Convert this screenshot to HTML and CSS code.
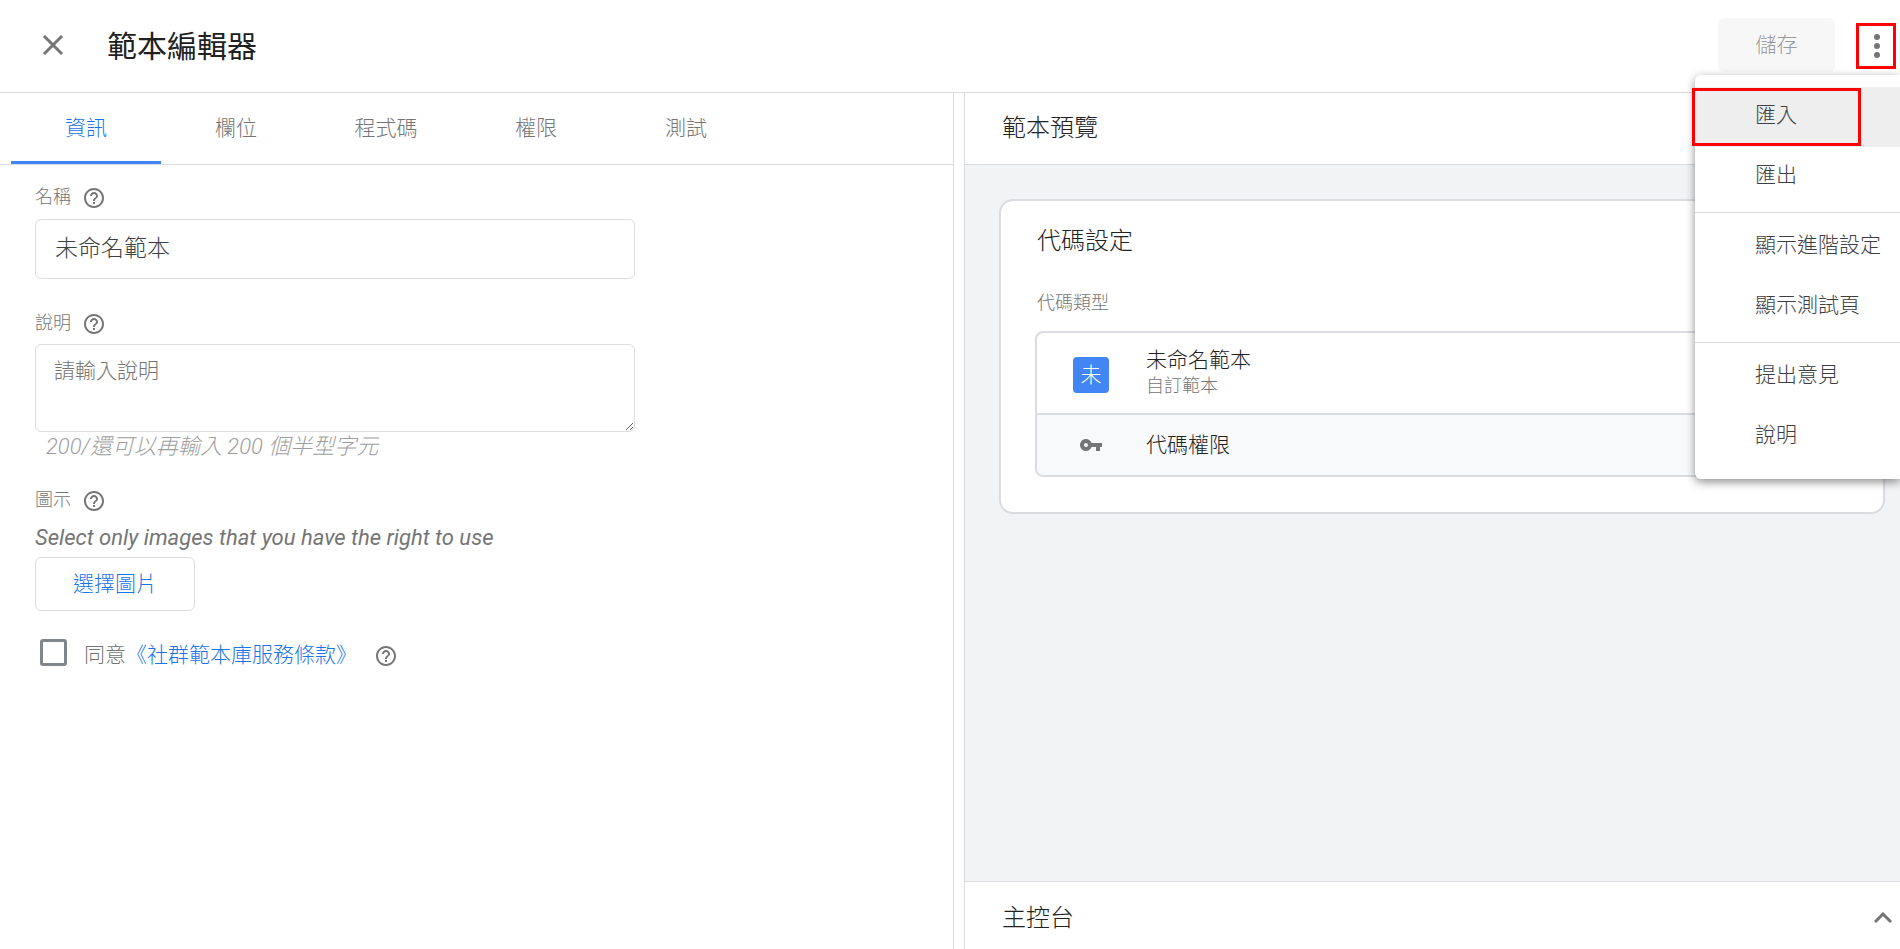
FILE: index.html
```html
<!DOCTYPE html>
<html lang="zh-Hant">
<head>
<meta charset="utf-8">
<title>範本編輯器</title>
<link rel="stylesheet" href="styles.css">
</head>
<body>
<svg class="symbols" aria-hidden="true">
  <symbol id="help" viewBox="0 0 24 24"><path d="M11 18h2v-2h-2v2zm1-16C6.48 2 2 6.48 2 12s4.480 10 10 10 10-4.480 10-10S17.520 2 12 2zm0 18c-4.410 0-8-3.590-8-8s3.590-8 8-8 8 3.590 8 8-3.590 8-8 8zm0-14c-2.210 0-4 1.790-4 4h2c0-1.100.9-2 2-2s2 .9 2 2c0 2-3 1.750-3 5h2c0-2.250 3-2.500 3-5 0-2.210-1.790-4-4-4z"/></symbol>
</svg>
<header class="topbar">
  <button class="icon-button" type="button" aria-label="關閉">
    <svg class="close-icon" viewBox="0 0 22 22"><path d="M2 2l18 18M20 2L2 20"/></svg>
  </button>
  <h1 class="title">範本編輯器</h1>
  <button class="save" type="button" disabled>儲存</button>
  <div class="overflow">
    <button class="kebab" type="button" aria-label="更多動作">
      <svg class="kebab-icon" viewBox="0 0 8 26"><circle cx="5" cy="4" r="3"/><circle cx="5" cy="13" r="3"/><circle cx="5" cy="22" r="3"/></svg>
    </button>
    <div class="menu" role="menu">
      <button class="menu-item active" type="button" role="menuitem">匯入</button>
      <button class="menu-item" type="button" role="menuitem">匯出</button>
      <hr class="menu-divider">
      <button class="menu-item" type="button" role="menuitem">顯示進階設定</button>
      <button class="menu-item" type="button" role="menuitem">顯示測試頁</button>
      <hr class="menu-divider">
      <button class="menu-item" type="button" role="menuitem">提出意見</button>
      <button class="menu-item" type="button" role="menuitem">說明</button>
    </div>
  </div>
</header>
<main class="workspace">
  <section class="editor">
    <nav class="tabs" role="tablist">
      <button class="tab selected" type="button" role="tab" aria-selected="true">資訊</button>
      <button class="tab" type="button" role="tab">欄位</button>
      <button class="tab" type="button" role="tab">程式碼</button>
      <button class="tab" type="button" role="tab">權限</button>
      <button class="tab" type="button" role="tab">測試</button>
    </nav>
    <form class="form">
      <div class="label-row"><label for="name">名稱</label><svg class="help"><use href="#help"/></svg></div>
      <input class="text-input" id="name" type="text" value="未命名範本">
      <div class="label-row spaced"><label for="desc">說明</label><svg class="help"><use href="#help"/></svg></div>
      <textarea class="text-area" id="desc" placeholder="請輸入說明"></textarea>
      <p class="counter">200/還可以再輸入 200 個半型字元</p>
      <div class="label-row icon-label"><span>圖示</span><svg class="help"><use href="#help"/></svg></div>
      <p class="note">Select only images that you have the right to use</p>
      <button class="choose" type="button">選擇圖片</button>
      <div class="agree">
        <input class="checkbox" id="agree" type="checkbox">
        <span class="agree-text"><label for="agree">同意</label><a class="link" href="#">《社群範本庫服務條款》</a></span>
        <svg class="help"><use href="#help"/></svg>
      </div>
    </form>
  </section>
  <div class="gutter"></div>
  <section class="preview">
    <h2 class="panel-title">範本預覽</h2>
    <div class="canvas">
      <article class="card">
        <h3 class="card-title">代碼設定</h3>
        <p class="card-label">代碼類型</p>
        <div class="tag-box">
          <div class="tag-row">
            <span class="tile">未</span>
            <div class="tag-text"><span class="tag-name">未命名範本</span><span class="tag-kind">自訂範本</span></div>
          </div>
          <div class="permission-row">
            <svg class="key" viewBox="1 6 22 12"><path d="M12.650 10C11.830 7.670 9.610 6 7 6c-3.310 0-6 2.690-6 6s2.690 6 6 6c2.610 0 4.830-1.670 5.650-4H17v4h4v-4h2v-4H12.650zM7 14c-1.100 0-2-.9-2-2s.9-2 2-2 2 .9 2 2-.9 2-2 2z"/></svg>
            <span class="permission-name">代碼權限</span>
            <svg class="chevron" viewBox="0 0 18 11"><path d="M1 1l8 8 8-8"/></svg>
          </div>
        </div>
      </article>
    </div>
    <button class="console" type="button">
      <span>主控台</span>
      <svg class="chevron" viewBox="0 0 18 11"><path d="M1 10l8-8 8 8"/></svg>
    </button>
  </section>
</main>
</body>
</html>
```
FILE: styles.css
```css
*, *::before, *::after { box-sizing: border-box; }

body {
  margin: 0;
  min-height: 100vh;
  display: flex;
  flex-direction: column;
  overflow-x: hidden;
  background: #fff;
  color: #212121;
  font: 300 21px/30px Roboto, "Noto Sans CJK TC", sans-serif;
}

button, input, textarea { font: inherit; color: inherit; }
button { background: none; border: 0; padding: 0; cursor: pointer; }
h1, h2, h3, p { margin: 0; font-weight: 300; }
.symbols { position: absolute; width: 0; height: 0; }

.topbar {
  display: flex;
  align-items: center;
  height: 93px;
  padding: 0 4px 2px 38px;
  border-bottom: 1px solid #dadce0;
}
.icon-button { width: 30px; height: 30px; display: grid; place-items: center; }
.close-icon { width: 22px; height: 22px; fill: none; stroke: #757575; stroke-width: 3; }
.title { margin-left: 39px; padding-top: 4px; font-size: 30px; line-height: 40px; font-weight: 400; }
.save {
  margin-left: auto;
  width: 117px;
  height: 54px;
  border-radius: 6px;
  background: #f7f7f7;
  color: #9a9a9a;
}
.overflow { position: relative; margin-left: 21px; padding-top: 2px; }
.kebab {
  display: grid;
  place-items: center;
  width: 40px;
  height: 46px;
  border: 3px solid #f00;
}
.kebab-icon { width: 8px; height: 26px; fill: #757575; }

.menu {
  position: absolute;
  z-index: 2;
  top: 54px;
  right: -4px;
  width: 205px;
  padding: 12px 0;
  border-radius: 6px 0 0 6px;
  background: #fff;
  box-shadow: 0 3px 10px rgba(0, 0, 0, .45);
}
.menu-item {
  position: relative;
  display: block;
  width: 100%;
  height: 60px;
  padding: 0 0 4px 60px;
  color: #3c4043;
  text-align: left;
  white-space: nowrap;
}
.menu-item.active { background: #eee; }
.menu-item.active::after {
  content: "";
  position: absolute;
  top: 1px;
  left: -3px;
  width: 169px;
  height: 58px;
  border: 3px solid #f00;
}
.menu-divider { margin: 5px 0 4px; border: 0; border-top: 1px solid #dadce0; }

.workspace {
  flex: 1;
  display: grid;
  grid-template-columns: minmax(0, 954fr) 10px minmax(0, 936fr);
}
.editor { border-right: 1px solid #dadce0; }
.tabs {
  display: flex;
  height: 72px;
  padding-left: 11px;
  border-bottom: 1px solid #dadce0;
}
.tab { width: 150px; padding-top: 1px; border-bottom: 3px solid transparent; color: #757575; }
.tab.selected { border-color: #4285f4; color: #1a73e8; }

.form { padding: 16px 35px; }
.label-row {
  display: flex;
  align-items: center;
  gap: 11px;
  height: 32px;
  margin-bottom: 6px;
  color: #757575;
  font-size: 18px;
}
.label-row.spaced { margin-top: 28px; margin-bottom: 5px; }
.label-row.icon-label { margin: 22px 0 6px; }
.help { width: 24px; height: 24px; margin-top: 2px; fill: #757575; }
.text-input, .text-area {
  display: block;
  width: 100%;
  max-width: 600px;
  border: 1px solid #dadce0;
  border-radius: 6px;
  background: #fff;
}
.text-input { height: 60px; padding: 0 19px 6px; color: #3c4043; font-size: 23px; }
.text-area { height: 88px; padding: 11px 18px; resize: vertical; }
.text-area::placeholder { color: #757575; opacity: 1; }
.counter { padding-left: 11px; color: #9e9e9e; font-style: italic; font-size: 22px; }
.note { color: #757575; font-style: italic; font-weight: 400; font-size: 22px; line-height: 32px; margin-bottom: 3px; }
.choose {
  width: 160px;
  height: 54px;
  border: 1px solid #dadce0;
  border-radius: 6px;
  color: #1a73e8;
}
.agree { display: flex; align-items: center; gap: 17px; margin-top: 23px; padding-left: 5px; color: #757575; }
.agree-text { padding-top: 6px; }
.agree .help { margin-top: 8px; }
.checkbox {
  appearance: none;
  width: 27px;
  height: 27px;
  margin: 0;
  border: 3px solid #80868b;
  border-radius: 3px;
}
.link { color: #1a73e8; text-decoration: none; }

.preview { display: flex; flex-direction: column; border-left: 1px solid #dadce0; }
.panel-title {
  height: 72px;
  padding: 20px 37px;
  border-bottom: 1px solid #dadce0;
  font-size: 24px;
}
.canvas { flex: 1; padding: 34px 15px 34px 34px; background: #f1f3f4; }
.card {
  padding: 25px 34px 35px;
  border: 2px solid #dadce0;
  border-radius: 14px;
  background: #fff;
}
.card-title { padding-left: 2px; font-size: 24px; }
.card-label { margin: 32px 0 13px; padding-left: 2px; color: #757575; font-size: 18px; }
.tag-box { border: 2px solid #dadce0; border-radius: 8px; overflow: hidden; }
.tag-row { display: flex; align-items: center; height: 82px; padding: 4px 0 0 36px; border-bottom: 2px solid #dadce0; }
.tile {
  display: grid;
  place-items: center;
  width: 36px;
  height: 36px;
  margin-right: 37px;
  border-radius: 4px;
  background: #4285f4;
  color: #fff;
}
.tag-text { display: flex; flex-direction: column; line-height: 26px; padding-bottom: 4px; }
.tag-kind { color: #757575; font-size: 18px; }
.permission-row { display: flex; align-items: center; height: 60px; padding: 0 134px 0 43px; background: #f8f9fa; }
.key { width: 22px; height: 12px; margin-right: 44px; fill: #757575; }
.chevron { width: 18px; height: 11px; margin-left: auto; fill: none; stroke: #757575; stroke-width: 3; }
.console {
  display: flex;
  align-items: center;
  height: 68px;
  padding: 4px 8px 0 37px;
  border-top: 1px solid #dadce0;
  font-size: 24px;
}
```
